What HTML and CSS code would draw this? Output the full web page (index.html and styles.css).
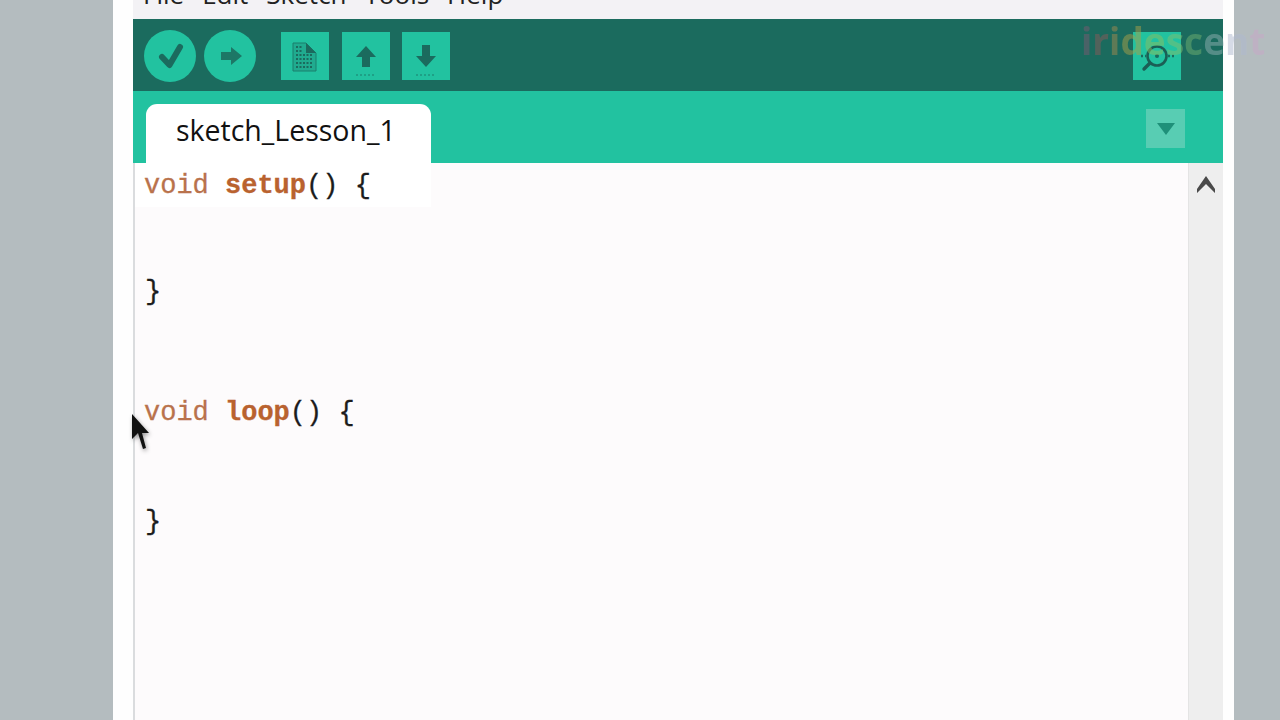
FILE: index.html
```html
<!DOCTYPE html>
<html lang="en">
<head>
<meta charset="utf-8">
<title>Sketch</title>
<link rel="stylesheet" href="styles.css">
</head>
<body>
<div class="window">
  <div class="ide">
    <div class="menu"><span>File</span><span>Edit</span><span>Sketch</span><span>Tools</span><span>Help</span></div>
    <div class="toolbar">
      <div class="round"><svg width="52" height="52" viewBox="0 0 52 52"><path d="M18 27l7.5 8L36 17" fill="none" stroke="#1b6b5e" stroke-width="6" stroke-linecap="round" stroke-linejoin="round"/></svg></div>
      <div class="round second"><svg width="52" height="52" viewBox="0 0 52 52"><path d="M17 22h10v-5l11 9-11 9v-5H17z" fill="#1d7766"/></svg></div>
      <div class="square first"><svg width="48" height="48" viewBox="0 0 48 48"><path d="M12 11h13l10 10v18H12z" fill="#20ab8f" stroke="#1b7f6c" stroke-width="1"/><path d="M25 11l10 10H25z" fill="#1b6b5e"/><path d="M15 15h7M15 19h7M15 23h17M15 27h17M15 31h17M15 35h17" stroke="#1b6b5e" stroke-width="2" stroke-dasharray="2 1.5"/></svg></div>
      <div class="square"><svg width="48" height="48" viewBox="0 0 48 48"><path d="M24 14l10 11h-6v10h-8V25h-6z" fill="#1b6b5e"/><path d="M14 43h20" stroke="#1b7f6c" stroke-width="1" stroke-dasharray="2 2"/></svg></div>
      <div class="square"><svg width="48" height="48" viewBox="0 0 48 48"><path d="M20 13h8v11h6L24 35 14 24h6z" fill="#1b6b5e"/><path d="M14 43h20" stroke="#1b7f6c" stroke-width="1" stroke-dasharray="2 2"/></svg></div>
      <div class="square monitor"><svg width="48" height="48" viewBox="0 0 48 48"><circle cx="24" cy="24" r="9.5" fill="none" stroke="#1b5f55" stroke-width="2.6"/><circle cx="24" cy="24" r="2" fill="#1b6b5e"/><path d="M17 31l-6 6" stroke="#1b5f55" stroke-width="3.4" stroke-linecap="round"/><path d="M8 24h5M35 24h6" stroke="#1b6b5e" stroke-width="2.4" stroke-dasharray="2 2"/></svg></div>
    </div>
    <div class="tabbar">
      <div class="tab">sketch_Lesson_1</div>
      <div class="tabmenu"><svg width="18" height="12" viewBox="0 0 18 12"><path d="M0 0h18l-9 12z" fill="#1f9079"/></svg></div>
    </div>
    <div class="editor">
      <div class="code">
        <div class="line first-line"><span class="kw">void</span> <b class="fn">setup</b>() {</div>
        <div class="line close-one">}</div>
        <div class="line loop-line"><span class="kw">void</span> <b class="fn">loop</b>() {</div>
        <div class="line close-two">}</div>
      </div>
      <div class="scrollbar"><svg width="20" height="18" viewBox="0 0 20 18"><path d="M10 0l9 13v4l-9-9-9 9v-4z" fill="#4a4a4a"/></svg></div>
    </div>
  </div>
</div>
<div class="watermark"><span class="c1">i</span><span class="c2">r</span><span class="c3">i</span><span class="c4">d</span><span class="c5">e</span><span class="c6">s</span><span class="c7">c</span><span class="c8">e</span><span class="c9">n</span><span class="c10">t</span></div>
<svg class="cursor" width="24" height="40" viewBox="0 0 24 40"><path d="M1 1v25l6-6 5 16 3-1-4-15h7z" fill="#111"/></svg>
</body>
</html>
```

FILE: styles.css
```css
* { box-sizing: border-box; }
html, body { margin: 0; height: 720px; overflow: hidden; }
body { background: #b4bcbf; position: relative; font-family: "Open Sans", "Liberation Sans", sans-serif; }

.window {
  width: 1121px;
  height: 720px;
  margin-left: 113px;
  padding: 0 11px 0 20px;
  background: #fefefe;
}
.ide {
  height: 720px;
  display: flex;
  flex-direction: column;
  overflow: hidden;
}

.menu {
  height: 19px;
  flex: none;
  display: flex;
  gap: 18px;
  align-items: flex-end;
  padding: 0 0 9px 10px;
  background: #f3f2f5;
  font-size: 26px;
  line-height: 32px;
  color: #222;
  overflow: hidden;
}

.toolbar {
  height: 72px;
  flex: none;
  display: flex;
  align-items: center;
  padding: 2px 42px 0 11px;
  background: #1b6b5e;
}
.round {
  width: 52px;
  height: 52px;
  border-radius: 50%;
  background: #22c2a0;
  flex: none;
}
.round.second { margin-left: 8px; }
.square {
  width: 48px;
  height: 48px;
  background: #22c2a0;
  flex: none;
  margin-left: 12.5px;
}
.square.first { margin-left: 25px; }
.square.monitor { margin-left: auto; }
.round svg, .square svg, .tabmenu svg, .scrollbar svg { display: block; }

.tabbar {
  height: 72px;
  flex: none;
  display: flex;
  align-items: flex-end;
  justify-content: space-between;
  padding: 0 38px 0 13px;
  background: #22c2a0;
}
.tab {
  width: 285px;
  height: 59px;
  padding: 8px 0 0 30px;
  background: #fff;
  border-radius: 11px 11px 0 0;
  font-size: 28.5px;
  line-height: 36px;
  color: #111;
}
.tabmenu {
  width: 39px;
  height: 39px;
  margin-bottom: 15px;
  background: #58cdb3;
  display: flex;
  align-items: center;
  justify-content: center;
}

.editor {
  flex: 1;
  display: flex;
  background: #fdfbfc;
  min-height: 0;
  border-left: 2px solid #dadcde;
}
.code {
  flex: 1;
  font-family: "Liberation Mono", monospace;
  font-size: 27px;
  line-height: 34px;
  color: #1c1c1c;
  -webkit-text-stroke: 0.3px currentColor;
}
.line { padding-left: 9px; white-space: pre; }
.first-line { width: 296px; height: 44px; padding-top: 1px; line-height: 44px; background: #fff; }
.close-one { margin-top: 68px; padding-left: 10px; }
.loop-line { margin-top: 87px; }
.close-two { margin-top: 75px; padding-left: 10px; }
.kw { color: #b9724c; }
.fn { color: #b9622f; }
.scrollbar {
  width: 35px;
  flex: none;
  padding: 13px 0 0 7px;
  background: #eeeeee;
  border-left: 1px solid #e4e4e4;
}

.watermark {
  position: absolute;
  left: 1081px;
  top: 16px;
  font-size: 37px;
  line-height: 50px;
  font-weight: 700;
  opacity: 0.5;
  white-space: pre;
}
.c1 { color: #7a5a70; }
.c2 { color: #8a5a5a; }
.c3 { color: #a08a50; }
.c4 { color: #a8a04a; }
.c5 { color: #8cc060; }
.c6 { color: #80c070; }
.c7 { color: #70b070; }
.c8 { color: #90b0b0; }
.c9 { color: #b0bad0; }
.c10 { color: #c8a8c8; }

.cursor {
  position: absolute;
  left: 131px;
  top: 413px;
  filter: drop-shadow(1px 2px 2px rgba(0, 0, 0, 0.4));
}
```
